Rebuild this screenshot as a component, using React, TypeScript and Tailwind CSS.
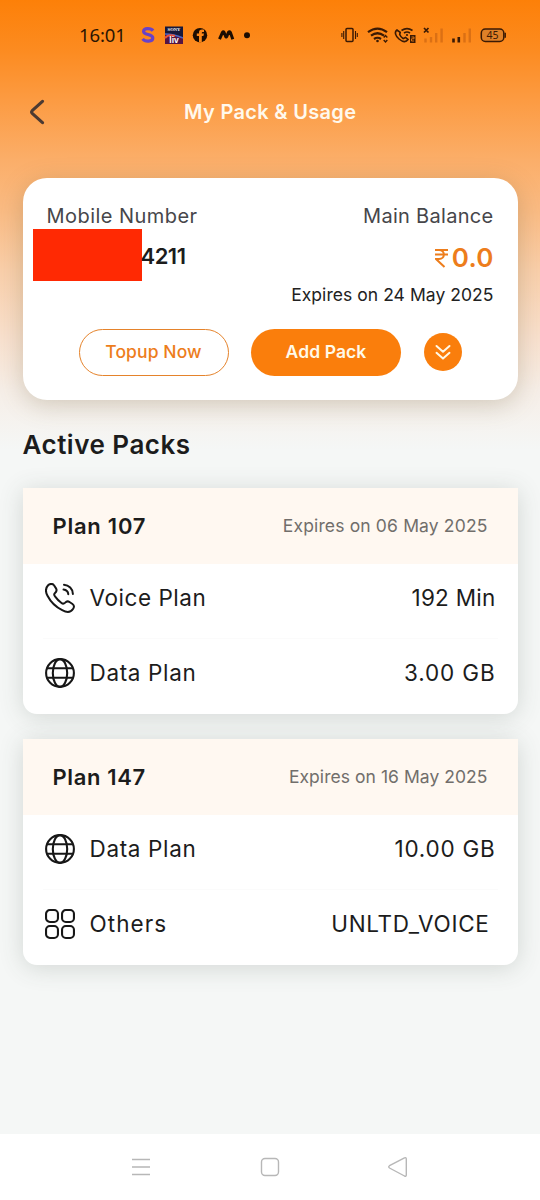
import React from "react";

function VoiceIcon() {
  return (
    <svg className="h-[30px] w-[30px]" viewBox="0 0 30 30" fill="none" stroke="#171717" strokeWidth="2" strokeLinecap="round" strokeLinejoin="round">
      <path d="M3.1 2.3 C5 .4 7.9.5 9 2.3 L11 5.4 C12.2 7.2 11.6 8.6 9.8 10.2 C8.8 11.1 9.1 12.3 10.2 13.7 C12 16.2 14.2 18.4 16.5 20 C18 21.1 19 20.8 20.2 19.6 C21.5 18.2 23 18 24.5 19 L27.5 21 C29.4 22.3 29.3 24.3 28 26 C25.7 29.5 21.7 29.6 17.2 27.2 C11.2 24.2 5.4 18.4 2.5 12.8 C.2 8.5.6 5 3.1 2.3Z" />
      <path d="M19 1.8 C23.8 2.1 27.8 5.8 27.9 10.9 M18.5 6.5 C21.3 6.8 23 8.4 23.3 11.2" />
    </svg>
  );
}

function GlobeIcon() {
  return (
    <svg className="h-[30px] w-[30px]" viewBox="0 0 30 30" fill="none" stroke="#171717" strokeWidth="2.1">
      <circle cx="15" cy="15" r="13.9" />
      <ellipse cx="15" cy="15" rx="7.2" ry="13.9" />
      <path d="M2 10.2H28M2 19.8H28" />
    </svg>
  );
}

function OthersIcon() {
  return (
    <svg className="h-[30px] w-[30px]" viewBox="0 0 30 30" fill="none" stroke="#171717" strokeWidth="2.1">
      <rect x="1.05" y="1.05" width="11.9" height="11.9" rx="3.8" />
      <rect x="17.05" y="1.05" width="11.9" height="11.9" rx="3.8" />
      <rect x="1.05" y="17.05" width="11.9" height="11.9" rx="3.8" />
      <rect x="17.05" y="17.05" width="11.9" height="11.9" rx="3.8" />
    </svg>
  );
}

function StatusBar() {
  return (
    <div className="flex h-[69px] items-center pl-[79px] text-[#2b1503]">
      <span className="w-[61px] whitespace-nowrap pt-px font-['Noto_Sans',sans-serif] text-[18.5px] leading-none tracking-[-0.1px]">16:01</span>
      <svg className="h-[18px] w-[112px] shrink-0" viewBox="0 0 112 18">
        <path d="M13 4.8C11 2 3.6 1.7 3.6 5.6C3.6 9.5 12.8 7.6 12.8 12C12.8 15.9 5.2 16.3 2.6 12.9" fill="none" stroke="#6842c7" strokeWidth="3.2" />
        <rect x="25" y=".5" width="18" height="17.5" fill="#17183a" />
        <path d="M25 9L43 11V18H25Z" fill="#551543" />
        <path d="M25 8C31 8 36 9 43 12" fill="none" stroke="#4c65c5" strokeWidth="1.5" />
        <path d="M25 12C28 8.5 32 9 35 10" fill="none" stroke="#e6533d" strokeWidth="2" />
        <text x="34" y="5.3" textAnchor="middle" fontSize="4.6" fontWeight="700" fill="white" fontFamily="Liberation Serif">SONY</text>
        <text x="34" y="16.5" textAnchor="middle" fontSize="8.5" fontWeight="700" fill="white" fontFamily="Liberation Sans">liv</text>
        <circle cx="60" cy="9.2" r="7.2" fill="#1c0d02" />
        <path d="M59 16.5V10H56.8V7.5H59V6.5C59 4 60.5 3 64 3.7V6C62 5.8 61.8 6.2 61.8 7.5H64L63.4 10H61.8V16.5Z" fill="#fb8718" />
        <path d="M79.5 13.2L82.5 6.3Q83.3 5.2 84 6.3L85.7 10.5Q86.2 11.5 86.9 10.2L88.5 6.3Q89.5 5.2 90.3 6.3L92.8 13.2" fill="none" stroke="#1c0d02" strokeWidth="3" strokeLinejoin="round" />
        <circle cx="107" cy="9.2" r="3" fill="#1c0d02" />
      </svg>
      <svg className="ml-[89px] h-6 w-[166px] shrink-0" viewBox="0 0 166 24" fill="none" stroke="#3b1a04">
        <rect x="5" y="5.5" width="7" height="13" rx="1" strokeWidth="1.5" />
        <path d="M2.7 8V16M14.5 8V16M.9 10V14M16.3 10V14" strokeWidth="1.1" />
        <path d="M27 9.2Q36.5 2 46 9.2M30 12.7Q36.5 7.8 43 12.7M33 16Q36.5 13.5 40 16" strokeWidth="2.2" />
        <circle cx="36.5" cy="18" r="1.3" fill="#3b1a04" stroke="none" />
        <path d="M42.7 14.5L44.5 12.5L46.3 14.5M42.7 17L44.5 19L46.3 17" strokeWidth="1.4" />
        <path d="M56 7C53 9 54.5 13 58 16C62 19.3 65 19.5 67 16.5L64.5 14.5L62.2 15.6Q59.5 13.6 58.7 11.5L59.2 9.3Z" strokeWidth="1.6" />
        <path d="M60.5 7.5Q66 3.8 71.5 7.5M63 10Q66 8 69 10" strokeWidth="1.6" />
        <circle cx="66" cy="12" r="1.1" fill="#3b1a04" stroke="none" />
        <rect x="69" y="12" width="5.5" height="8" fill="#3b1a04" stroke="none" />
        <path d="M70.5 14H73V15.8H70.5V18H73" stroke="#fb8718" strokeWidth=".8" />
        <path d="M83 5L87.5 9.5M87.5 5L83 9.5" strokeWidth="1.7" />
        <path d="M84.5 15.5V19.5M90 14V19.5M95.2 10V19.5M100.6 5.5V19.5" stroke="#db7014" strokeWidth="2.4" />
        <path d="M112.5 15.5V19.5M117.8 14V19.5" strokeWidth="2.6" />
        <path d="M123.5 10V19.5M128.8 5.5V19.5" stroke="#db7014" strokeWidth="2.4" />
        <rect x="140.3" y="6" width="22.5" height="12.5" rx="4" fill="#df8128" strokeWidth="1.5" />
        <path d="M164.2 9.7V14.7" strokeWidth="1.5" />
        <text x="151.5" y="16.1" fontSize="10.5" textAnchor="middle" fill="#3b1a04" stroke="none" fontFamily="Noto Sans, sans-serif">45</text>
      </svg>
    </div>
  );
}

function PackRow({ icon, label, value, labelClass, valueClass }: { icon: React.ReactNode; label: string; value: string; labelClass: string; valueClass: string }) {
  return (
    <div className="flex h-[75px] items-center whitespace-nowrap pb-[6px] pl-[22px] pr-[22px] text-[22.5px] text-[#1c1c1c]">
      {icon}
      <span className={"ml-[15px] " + labelClass}>{label}</span>
      <span className={"ml-auto " + valueClass}>{value}</span>
    </div>
  );
}

function PackCard({ title, titleClass, expiry, expiryClass, children }: { title: string; titleClass: string; expiry: string; expiryClass: string; children: React.ReactNode }) {
  return (
    <section className="h-[226px] overflow-hidden rounded-b-[14px] bg-white shadow-[0_3px_24px_rgba(64,82,67,0.19)]">
      <div className="flex h-[76px] items-center justify-between whitespace-nowrap bg-[#fff8f1] px-[30px] pt-[2px]">
        <h3 className={"text-[22px] font-semibold text-[#1c1c1c] " + titleClass}>{title}</h3>
        <span className={"text-[17.5px] text-[#716e6b] " + expiryClass}>{expiry}</span>
      </div>
      {children}
    </section>
  );
}

export default function App() {
  return (
    <div className="flex h-[1200px] w-[540px] flex-col overflow-hidden bg-[#f5f7f6] font-['Inter',sans-serif]">
      <div className="flex h-[1134px] flex-col bg-[linear-gradient(180deg,#fd8008_0px,#fc8b20_50px,#fc9b42_100px,#fbae69_160px,#fabb83_210px,#f9cfaa_270px,#f8e1cf_340px,#f6eee7_390px,#f5f7f6_450px)]">
        <StatusBar />
        <header className="flex h-[86px] items-center">
          <svg className="ml-[29px] h-7 w-4" viewBox="0 0 16 28" fill="none" stroke="#4c3a32" strokeWidth="3.1" strokeLinecap="round" strokeLinejoin="round">
            <path d="M13.5 3.3L3.2 12.7Q2 14 3.2 15.3L13.5 24.7" />
          </svg>
          <h1 className="ml-[139px] whitespace-nowrap text-[20px] font-semibold tracking-[0.32px] text-[#fff9ed]">My Pack &amp; Usage</h1>
        </header>
        <main className="px-[22.5px] pt-[22.5px]">
          <section className="h-[222px] rounded-[24px] bg-white px-6 pt-6 shadow-[0_5px_24px_rgba(110,95,60,0.27)]">
            <div className="flex h-[111px] justify-between whitespace-nowrap">
              <div>
                <div className="h-[27px] text-[20px] leading-[28px] tracking-[0.45px] text-[#46464a]">Mobile Number</div>
                <div className="ml-[-14px] flex h-[52px] items-center">
                  <span className="h-[52px] w-[109px] bg-[#ff2903]" />
                  <span className="ml-[-1px] pt-[3px] text-[22px] font-semibold tracking-[-0.5px] text-[#1c1c1c]">4211</span>
                </div>
              </div>
              <div className="flex flex-col items-end">
                <div className="h-[28px] text-[20px] leading-[28px] tracking-[0.3px] text-[#46464a]">Main Balance</div>
                <div className="flex h-[56px] items-center gap-[4px] text-[#ed7d1c]">
                  <svg className="h-[20px] w-[13px]" viewBox="0 0 13 20" fill="none" stroke="currentColor" strokeWidth="2">
                    <path d="M0 2H13M0 6.5H13M0 2H4C10.5 2 10.5 11 4 11H1L9.5 19" />
                  </svg>
                  <span className="text-[26px] font-semibold tracking-[0.2px]">0.0</span>
                </div>
                <div className="text-[17.5px] leading-[18px] tracking-[0.05px] text-[#222]">Expires on 24 May 2025</div>
              </div>
            </div>
            <div className="mt-4 flex h-[47px] items-center pl-8">
              <button className="h-[47px] w-[150px] whitespace-nowrap rounded-full border-[1.5px] border-[#e5832b] text-[17.5px] font-medium tracking-[0.1px] text-[#ed7d1c]">Topup Now</button>
              <button className="ml-[22.5px] h-[47px] w-[150px] whitespace-nowrap rounded-full bg-[#fa7e0c] text-[17.5px] font-semibold tracking-[0.1px] text-[#fff9e8]">Add Pack</button>
              <button className="ml-[22.5px] flex h-[38px] w-[38px] items-center justify-center rounded-full bg-[#fa7e0c]">
                <svg className="h-4 w-4" viewBox="0 0 16 16" fill="none" stroke="#fff9e8" strokeWidth="2" strokeLinecap="round" strokeLinejoin="round">
                  <path d="M1.5 2L8 7.8L14.5 2M1.5 8.8L8 14.6L14.5 8.8" />
                </svg>
              </button>
            </div>
          </section>
          <h2 className="mt-7 h-[60px] text-[26px] font-semibold leading-[34px] tracking-[0.5px] text-[#1c1c1c]">Active Packs</h2>
          <div className="flex flex-col gap-[25px]">
            <PackCard title="Plan 107" titleClass="tracking-[0.75px]" expiry="Expires on 06 May 2025" expiryClass="tracking-[0.15px]">
              <PackRow icon={<VoiceIcon />} label="Voice Plan" value="192 Min" labelClass="tracking-[0.55px]" valueClass="tracking-[0.25px]" />
              <div className="mx-[20px] -mt-px h-px bg-[#fbfbfb]" />
              <PackRow icon={<GlobeIcon />} label="Data Plan" value="3.00 GB" labelClass="tracking-[0.65px]" valueClass="tracking-[0.85px]" />
            </PackCard>
            <PackCard title="Plan 147" titleClass="tracking-[0.65px]" expiry="Expires on 16 May 2025" expiryClass="tracking-[0.05px]">
              <PackRow icon={<GlobeIcon />} label="Data Plan" value="10.00 GB" labelClass="tracking-[0.65px]" valueClass="tracking-[0.75px]" />
              <div className="mx-[20px] -mt-px h-px bg-[#fbfbfb]" />
              <PackRow icon={<OthersIcon />} label="Others" value="UNLTD_VOICE" labelClass="tracking-[1.05px]" valueClass="mr-[6px] tracking-[0.7px]" />
            </PackCard>
          </div>
        </main>
      </div>
      <nav className="flex h-[66px] items-center bg-white pl-[130px]">
        <svg className="h-6 w-[280px]" viewBox="0 0 280 24" fill="none" stroke="#b7b7b7" strokeWidth="1.4" strokeLinejoin="round">
          <path d="M2 4.5H20M2 12H20M2 19.5H20" />
          <rect x="131.5" y="3.5" width="17" height="17" rx="3.5" />
          <path d="M259.5 10.7L274.5 2.8Q276.3 2.2 276.3 4V20Q276.3 21.8 274.5 21L259.5 13Q258 11.8 259.5 10.7Z" />
        </svg>
      </nav>
    </div>
  );
}
